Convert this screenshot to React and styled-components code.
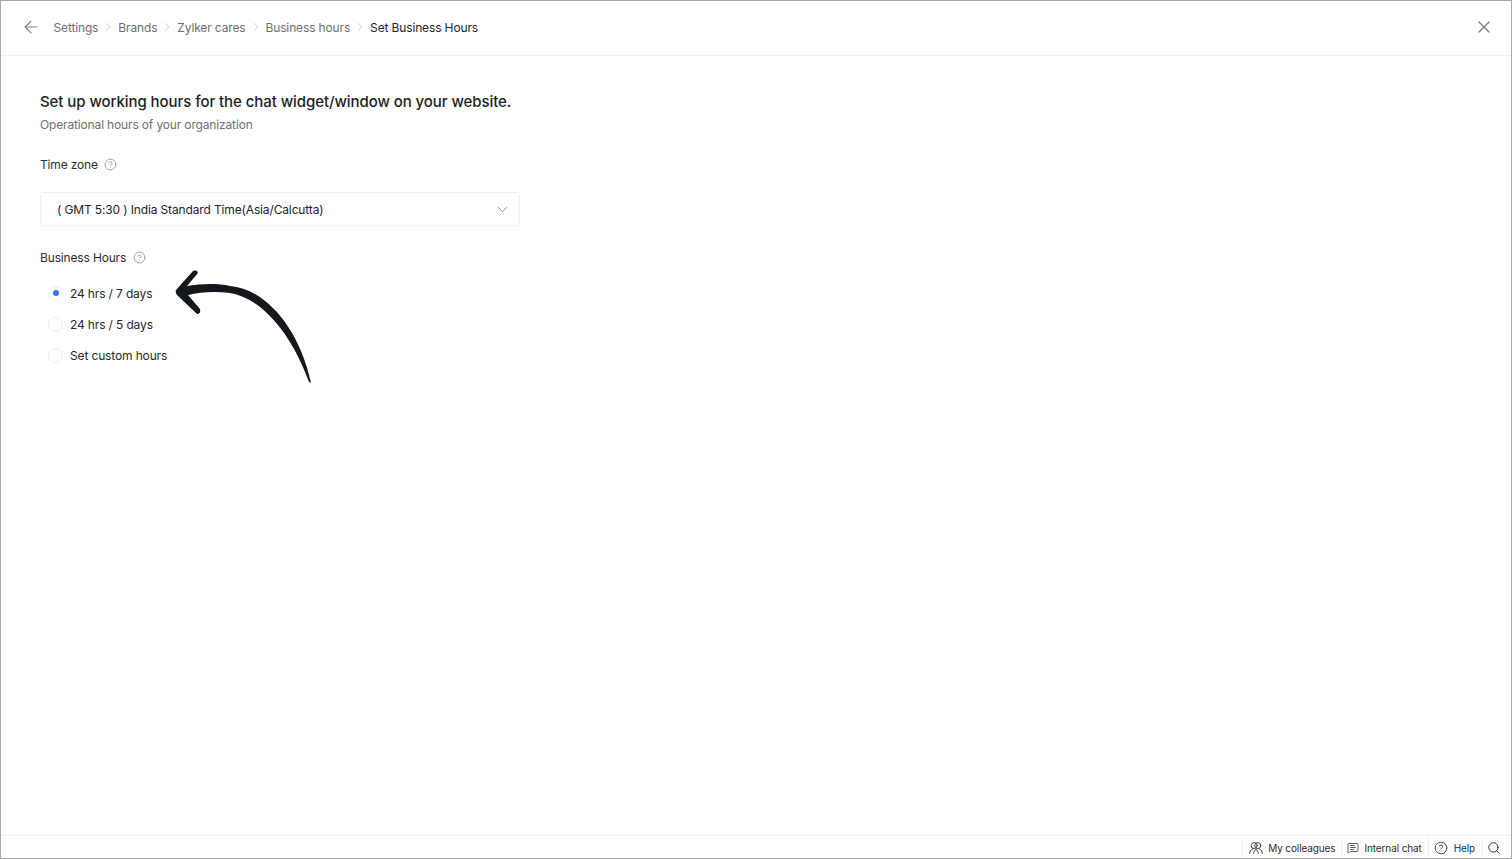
import React, { useState } from 'react';
import styled, { createGlobalStyle } from 'styled-components';
import { ArrowLeft, ChevronDown, ChevronRight, CircleHelp, MessageSquareText, Search, X } from 'lucide-react';

const GlobalStyle = createGlobalStyle`
  html, body {
    margin: 0;
    height: 100%;
    background: #fff;
  }
  body {
    font-family: Inter, "Liberation Sans", sans-serif;
    color: #1d2024;
  }
`;

const Frame = styled.div`
  position: relative;
  box-sizing: border-box;
  height: 859px;
  display: flex;
  flex-direction: column;
  border: 1px solid #a9a9a9;
  overflow: hidden;
`;

const Header = styled.header`
  box-sizing: border-box;
  flex: 0 0 55px;
  display: flex;
  align-items: center;
  padding: 0 17px 2px 19.8px;
  border-bottom: 1px solid #f0f0f0;
`;

const BackButton = styled.span`
  display: flex;
  color: #808080;
  margin-right: 12.7px;
`;

const Crumbs = styled.nav`
  flex: 1;
  display: flex;
  align-items: center;
  gap: 3px;
  font-size: 12px;
  letter-spacing: -0.14px;
`;

const Crumb = styled.span`
  color: ${p => (p.$current ? '#22252a' : '#6d6f73')};
`;

const Separator = styled.span`
  display: flex;
  color: #b5b5b5;
`;

const CloseButton = styled.span`
  display: flex;
  color: #808080;
`;

const Content = styled.main`
  flex: 1;
  padding: 36px 39px 0;
`;

const Title = styled.h1`
  margin: 0;
  font-size: 15px;
  line-height: 20px;
  font-weight: 500;
  letter-spacing: -0.07px;
  color: #1b1e22;
`;

const Subtitle = styled.p`
  margin: 5px 0 0;
  font-size: 12px;
  line-height: 16px;
  letter-spacing: -0.15px;
  color: #6d6f73;
`;

const Label = styled.div`
  display: flex;
  align-items: center;
  gap: 6.5px;
  height: 16px;
  margin-top: ${p => p.$top}px;
  font-size: 12px;
  letter-spacing: -0.16px;
  color: #2a2d31;
`;

const HelpIcon = styled.span`
  display: flex;
  color: #8e8e8e;
`;

const Select = styled.div`
  box-sizing: border-box;
  width: 480px;
  height: 34px;
  margin-top: 19.5px;
  padding: 0 8px 0 16px;
  display: flex;
  align-items: center;
  justify-content: space-between;
  border: 1px solid #efefef;
  border-radius: 3px;
  font-size: 12px;
  letter-spacing: -0.14px;
  color: #1f2226;
`;

const SelectArrow = styled.span`
  display: flex;
  color: #85878a;
`;

const RadioList = styled.div`
  margin-top: 18px;
  display: flex;
  flex-direction: column;
  gap: 11.3px;
`;

const RadioRow = styled.label`
  display: flex;
  align-items: center;
  gap: 7px;
  height: 20px;
  padding-left: 8px;
  font-size: 12px;
  letter-spacing: -0.14px;
  color: #25282c;
  cursor: pointer;
`;

const RadioInput = styled.input`
  position: absolute;
  opacity: 0;
  pointer-events: none;
`;

const RadioCircle = styled.span`
  box-sizing: border-box;
  width: 15px;
  height: 15px;
  display: flex;
  align-items: center;
  justify-content: center;
  border: 1px solid #ececec;
  border-radius: 50%;
  &::after {
    content: '';
    width: 6px;
    height: 6px;
    border-radius: 50%;
    background: ${p => (p.$checked ? '#3272f2' : 'transparent')};
  }
`;

const ArrowDrawing = styled.svg`
  position: absolute;
  left: 164px;
  top: 264px;
  width: 155px;
  height: 125px;
  fill: #14181d;
`;

const Footer = styled.footer`
  box-sizing: border-box;
  flex: 0 0 23px;
  display: flex;
  justify-content: flex-end;
  align-items: stretch;
  padding-top: 1px;
  border-top: 1px solid #efefef;
  font-size: 10px;
  letter-spacing: -0.12px;
  color: #2a2d31;
`;

const FooterItem = styled.div`
  display: flex;
  align-items: center;
  gap: ${p => p.$gap}px;
  padding: 0 ${p => p.$right}px 0 ${p => p.$left || 5}px;
  border-left: 1px solid #f0f0f0;
`;

// two overlapping people, lucide has no symmetric one
const ColleaguesIcon = () => (
  <svg width="16" height="16" viewBox="0 0 16 16" fill="none" stroke="currentColor" strokeWidth="0.9" strokeLinecap="round">
    <circle cx="6.2" cy="5.6" r="3" />
    <circle cx="9.8" cy="5.6" r="3" />
    <path d="M1.6 13.4c.2-2.5 1.5-4 3.4-4.6" />
    <path d="M14.4 13.4c-.2-2.5-1.5-4-3.4-4.6" />
    <path d="M5.6 13.4c.2-1.8 1.1-3.2 2.4-4 1.3.8 2.2 2.2 2.4 4" />
  </svg>
);

const hoursOptions = ['24 hrs / 7 days', '24 hrs / 5 days', 'Set custom hours'];
const crumbs = ['Settings', 'Brands', 'Zylker cares', 'Business hours'];

const App = () => {
  const [hours, setHours] = useState(hoursOptions[0]);

  return (
    <Frame>
      <GlobalStyle />
      <Header>
        <BackButton><ArrowLeft size={20} strokeWidth={1.4} /></BackButton>
        <Crumbs>
          {crumbs.map(crumb => (
            <React.Fragment key={crumb}>
              <Crumb>{crumb}</Crumb>
              <Separator><ChevronRight size={14} strokeWidth={1.2} /></Separator>
            </React.Fragment>
          ))}
          <Crumb $current>Set Business Hours</Crumb>
        </Crumbs>
        <CloseButton><X size={20} strokeWidth={1.6} /></CloseButton>
      </Header>
      <Content>
        <Title>Set up working hours for the chat widget/window on your website.</Title>
        <Subtitle>Operational hours of your organization</Subtitle>
        <Label $top={23.5}>
          Time zone
          <HelpIcon><CircleHelp size={13} strokeWidth={1.5} /></HelpIcon>
        </Label>
        <Select>
          ( GMT 5:30 ) India Standard Time(Asia/Calcutta)
          <SelectArrow><ChevronDown size={17} strokeWidth={1.4} /></SelectArrow>
        </Select>
        <Label $top={23}>
          Business Hours
          <HelpIcon><CircleHelp size={13} strokeWidth={1.5} /></HelpIcon>
        </Label>
        <RadioList>
          {hoursOptions.map(option => (
            <RadioRow key={option}>
              <RadioInput type="radio" name="hours" checked={hours === option} onChange={() => setHours(option)} />
              <RadioCircle $checked={hours === option} />
              {option}
            </RadioRow>
          ))}
        </RadioList>
      </Content>
      <Footer>
        <FooterItem $gap={4} $right={6}><ColleaguesIcon />My colleagues</FooterItem>
        <FooterItem $gap={5} $right={6}><MessageSquareText size={12} strokeWidth={1.5} />Internal chat</FooterItem>
        <FooterItem $gap={6} $right={7}><CircleHelp size={14} strokeWidth={1.4} />Help</FooterItem>
        <FooterItem $gap={0} $left={4} $right={10}><Search size={14} strokeWidth={1.7} /></FooterItem>
      </Footer>
      <ArrowDrawing viewBox="0 0 155 125">
        <path d="M11 25 L28 6 Q32 4 33 8 L22 21 C35 19 52 18 65 21 C100 24 134 62 146 118 L144 117 C125 65 95 33 65 28 C50 26 35 27 23 30 L35 44 Q36 49 32 49 L12 30 Q10 27 11 25 Z" />
      </ArrowDrawing>
    </Frame>
  );
};

export default App;
